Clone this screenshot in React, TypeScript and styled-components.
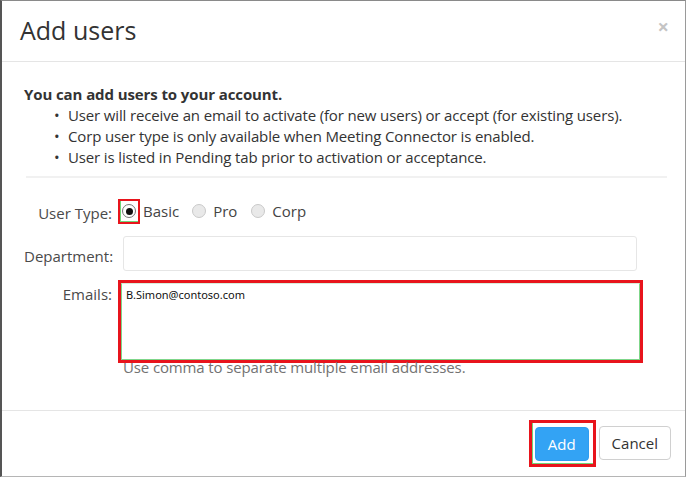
import React from "react";
import styled, { createGlobalStyle } from "styled-components";

const Global = createGlobalStyle`
  html, body { margin: 0; padding: 0; background: #fff; }
  body { font-family: "Open Sans", "Noto Sans", sans-serif; color: #333; }
  * { box-sizing: border-box; }
`;

const Frame = styled.div`
  width: 686px;
  height: 477px;
  border-top: 1px solid #8a8a8a;
  border-left: 2px solid #555;
  border-right: 1px solid #9a9a9a;
  border-bottom: 1px solid #b5b5b5;
  background: #fff;
  display: flex;
  flex-direction: column;
  overflow: hidden;
`;

const Header = styled.div`
  height: 61px;
  flex: none;
  display: flex;
  align-items: center;
  justify-content: space-between;
  padding: 0 16px 0 18px;
  border-bottom: 1px solid #e5e5e5;
`;

const Title = styled.h1`
  margin: 0;
  font-size: 25px;
  font-weight: 400;
  color: #333;
  line-height: 1;
  padding-bottom: 2px;
`;

const Close = styled.span`
  font-size: 20px;
  font-weight: 700;
  color: #c4c4c4;
  line-height: 1;
  margin-top: -8px;
`;

const Body = styled.div`
  flex: 1;
  padding: 22px 20px 0 22px;
  display: flex;
  flex-direction: column;
`;

const Intro = styled.div`
  font-size: 15px;
  line-height: 21px;
  color: #333;
`;

const Lead = styled.div`
  font-weight: 700;
  letter-spacing: -0.1px;
`;

const Bullets = styled.ul`
  margin: 0;
  padding: 0 0 0 44px;
  list-style: none;
`;

const Bullet = styled.li`
  position: relative;
  letter-spacing: -0.14px;
  &::before {
    content: "•";
    position: absolute;
    left: -14px;
    top: 0;
  }
`;

const Divider = styled.hr`
  margin: 8px 0 0 2px;
  border: none;
  border-top: 2px solid #f1f1f1;
  width: 641px;
`;

const Form = styled.div`
  display: grid;
  grid-template-columns: 88px 1fr;
  column-gap: 9px;
  row-gap: 0;
  margin-top: 25px;
  font-size: 15px;
  color: #555;
`;

const Label = styled.div<{ $top?: number }>`
  text-align: right;
  padding-top: ${(p) => p.$top ?? 0}px;
  color: #4a4a4a;
  white-space: nowrap;
`;

const RadioRow = styled.div`
  display: flex;
  align-items: center;
  height: 26px;
  margin-top: -5px;
  margin-bottom: 12px;
  color: #444;
`;

const Mark = styled.span`
  display: inline-flex;
  align-items: center;
  justify-content: center;
  width: 22px;
  height: 25px;
  border: 2px solid #e8141c;
  box-shadow: inset 1px -1px 0 #6fd67a;
  margin-left: -3px;
  margin-right: 3px;
`;

const Radio = styled.span<{ $checked?: boolean; $space?: number }>`
  width: 14px;
  height: 14px;
  border-radius: 50%;
  flex: none;
  margin-left: ${(p) => p.$space ?? 0}px;
  border: 1px solid ${(p) => (p.$checked ? "#777" : "#c9c9c9")};
  background: ${(p) => (p.$checked ? "#fff" : "#e9e9e9")};
  display: inline-flex;
  align-items: center;
  justify-content: center;
  &::after {
    content: "";
    width: 7px;
    height: 7px;
    border-radius: 50%;
    background: ${(p) => (p.$checked ? "#111" : "transparent")};
  }
`;

const Option = styled.span<{ $lead?: number }>`
  margin-left: ${(p) => p.$lead ?? 7}px;
`;

const Input = styled.div`
  width: 514px;
  height: 35px;
  border: 1px solid #e6e6e6;
  border-radius: 3px;
  margin-left: 2px;
  margin-bottom: 9px;
`;

const EmailsBox = styled.div`
  width: 525px;
  height: 83px;
  margin-left: -3px;
  border: 3px solid #e8141c;
  background: #fff;
`;

const TextArea = styled.div`
  height: 100%;
  border: 1px solid #7fd68a;
  border-top-color: #d6eedb;
  padding: 5px 4px;
  font-family: "Noto Sans", "Open Sans", sans-serif;
  font-size: 11px;
  color: #111;
  line-height: 1;
`;

const Help = styled.div`
  grid-column: 2;
  margin-left: 2px;
  margin-top: -6px;
  color: #737373;
  letter-spacing: -0.13px;
`;

const Footer = styled.div`
  height: 66px;
  flex: none;
  border-top: 1px solid #e5e5e5;
  display: flex;
  align-items: center;
  justify-content: flex-end;
  padding: 0 14px 2px 0;
  gap: 3px;
`;

const AddMark = styled.div`
  border: 3px solid #e8141c;
  padding: 4px 4px 3px 3px;
  box-shadow: inset 1px -1px 0 #6fd67a;
  margin-top: 1px;
`;

const Button = styled.button<{ $primary?: boolean }>`
  font-family: "Open Sans", "Noto Sans", sans-serif;
  font-size: 15px;
  height: 34px;
  padding: 0 12px;
  border-radius: 4px;
  border: 1px solid ${(p) => (p.$primary ? "#2f9cf0" : "#d0d0d0")};
  background: ${(p) => (p.$primary ? "#33a3f4" : "#fff")};
  color: ${(p) => (p.$primary ? "#fff" : "#333")};
  cursor: pointer;
  display: block;
`;

export default function App() {
  return (
    <>
      <Global />
      <Frame>
        <Header>
          <Title>Add users</Title>
          <Close>×</Close>
        </Header>
        <Body>
          <Intro>
            <Lead>You can add users to your account.</Lead>
            <Bullets>
              <Bullet>User will receive an email to activate (for new users) or accept (for existing users).</Bullet>
              <Bullet>Corp user type is only available when Meeting Connector is enabled.</Bullet>
              <Bullet>User is listed in Pending tab prior to activation or acceptance.</Bullet>
            </Bullets>
          </Intro>
          <Divider />
          <Form>
            <Label $top={-2}>User Type:</Label>
            <RadioRow>
              <Mark>
                <Radio $checked />
              </Mark>
              <Option $lead={0}>Basic</Option>
              <Radio $space={13} />
              <Option>Pro</Option>
              <Radio $space={14} />
              <Option>Corp</Option>
            </RadioRow>
            <Label $top={10}>Department:</Label>
            <Input />
            <Label $top={4}>Emails:</Label>
            <EmailsBox>
              <TextArea>B.Simon@contoso.com</TextArea>
            </EmailsBox>
            <Help>Use comma to separate multiple email addresses.</Help>
          </Form>
        </Body>
        <Footer>
          <AddMark>
            <Button $primary>Add</Button>
          </AddMark>
          <Button>Cancel</Button>
        </Footer>
      </Frame>
    </>
  );
}
